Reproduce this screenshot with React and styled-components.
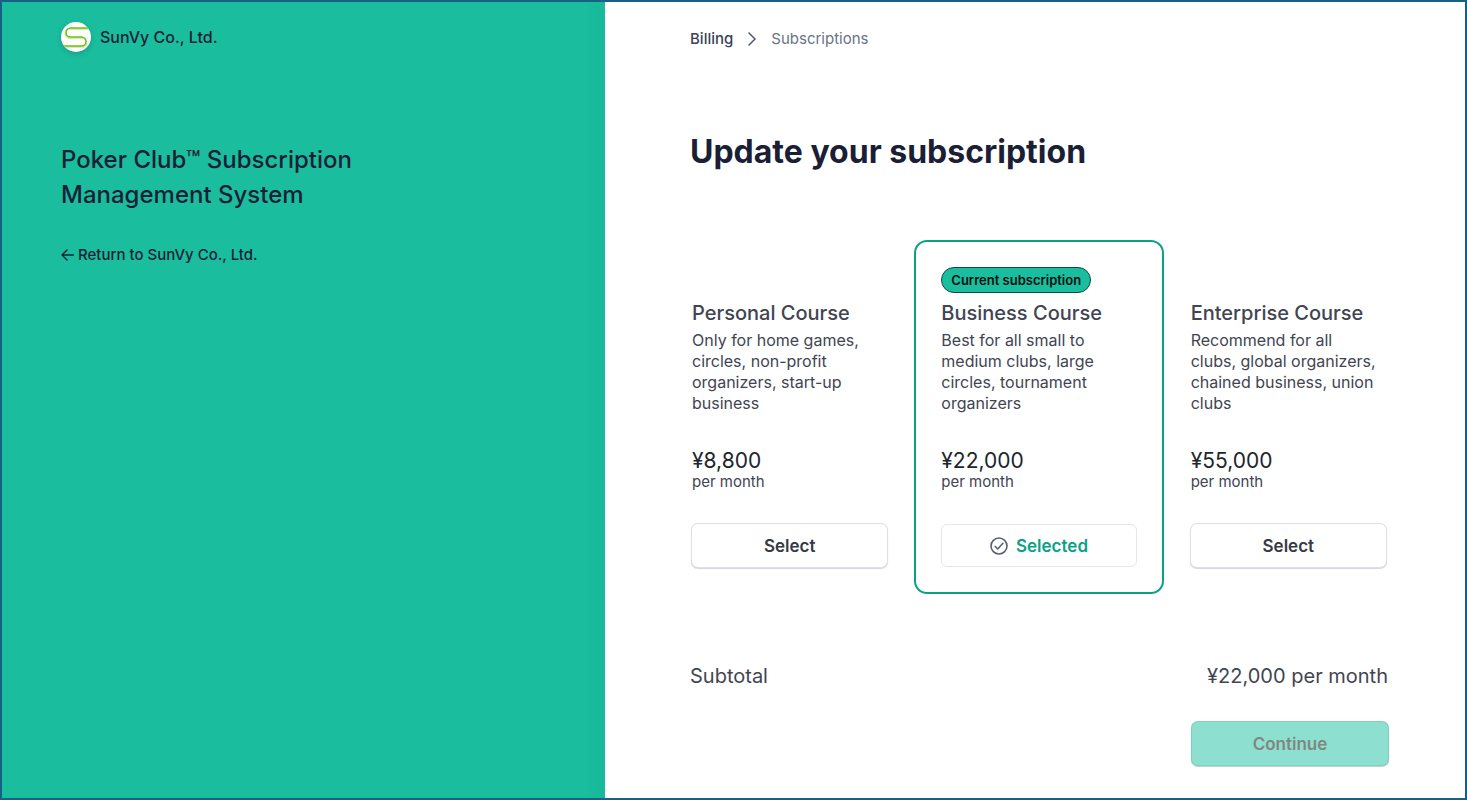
import React from "react";
import styled, { createGlobalStyle } from "styled-components";

const GlobalStyle = createGlobalStyle`
  *, *::before, *::after { box-sizing: border-box; }
  body { margin: 0; background: #fff; font-family: Inter, "Noto Sans", sans-serif; color: #414552; }
  h1, h2, h3, p { margin: 0; }
`;

const Page = styled.div`
  display: grid;
  grid-template-columns: 603fr 860fr;
  min-height: 100vh;
  border: 2px solid #186186;
`;

const BrandPanel = styled.aside`
  display: flex;
  flex-direction: column;
  align-items: flex-start;
  padding: 19px 59px;
  color: #1a1f36;
  background: linear-gradient(to left, #17b999, #18bb9b 14px, #1abd9d 20px);
`;

const Brand = styled.div`
  display: flex;
  align-items: center;
  gap: 9px;
  height: 32px;
  font-size: 16px;
  font-weight: 500;
`;

const Logo = styled.svg`
  width: 30px;
  height: 30px;
  border-radius: 50%;
  background: #fff;
  box-shadow: 0 2px 5px rgba(26, 31, 54, 0.2);
`;

const BrandTitle = styled.h2`
  max-width: 340px;
  margin-top: 89px;
  font-size: 24px;
  line-height: 35px;
  font-weight: 500;
`;

const ReturnLink = styled.a`
  display: flex;
  align-items: center;
  gap: 4px;
  margin-top: 32px;
  font-size: 15px;
  line-height: 22px;
  font-weight: 500;
  color: inherit;
  text-decoration: none;
`;

const Main = styled.main`
  padding: 25px 52px 30px 60px;
`;

const Inset = styled.div`
  padding: 0 25px;
`;

const Breadcrumbs = styled.nav`
  display: flex;
  align-items: center;
  gap: 14px;
  font-size: 15px;
  line-height: 24px;
  color: #697386;
`;

const CrumbLink = styled.a`
  font-weight: 500;
  color: #3c4257;
  text-decoration: none;
`;

const Title = styled.h1`
  margin-top: 79px;
  font-size: 32px;
  line-height: 44px;
  font-weight: 700;
  color: #1a1f36;
`;

const Plans = styled.div`
  display: grid;
  grid-template-columns: repeat(3, 1fr);
  margin-top: 66px;
`;

const Plan = styled.section`
  display: flex;
  flex-direction: column;
  padding: 25px;
  border: 2px solid ${(p) => (p.$current ? "#0aa287" : "transparent")};
  border-radius: 13px;
`;

const BadgeRow = styled.div`
  height: 26px;
`;

const Badge = styled.span`
  display: inline-flex;
  align-items: center;
  height: 26px;
  padding: 0 9px;
  border: 1px solid #0b4b41;
  border-radius: 13px;
  background: #1abd9d;
  color: #06110f;
  font-size: 13px;
  font-weight: 600;
  white-space: nowrap;
`;

const PlanName = styled.h3`
  margin-top: 5px;
  font-size: 20px;
  line-height: 30px;
  font-weight: 500;
  white-space: nowrap;
`;

const PlanText = styled.p`
  max-width: 190px;
  margin-top: 2px;
  min-height: 84px;
  font-size: 16px;
  line-height: 21px;
`;

const Price = styled.p`
  margin-top: 34px;
  font-size: 21px;
  line-height: 26px;
  color: #21252c;
`;

const Period = styled.p`
  font-size: 15px;
  line-height: 16px;
`;

const Button = styled.button`
  display: flex;
  align-items: center;
  justify-content: center;
  gap: 8px;
  width: 100%;
  height: 43px;
  padding: 0;
  border: 0;
  border-radius: 6px;
  background: #fff;
  box-shadow: 0 0 0 1px #dde1e7, 0 1px 1px 1px #d3d7dd;
  color: #353a44;
  font: 600 17px Inter, "Noto Sans", sans-serif;
  cursor: pointer;
`;

const SelectButton = styled(Button)`
  margin-top: 34px;
`;

const SelectedButton = styled(SelectButton)`
  border: 1px solid #e3e6eb;
  box-shadow: none;
  color: #0aa287;
`;

const Subtotal = styled.div`
  display: flex;
  justify-content: space-between;
  margin-top: 67px;
  font-size: 20px;
  line-height: 30px;
`;

const Actions = styled.div`
  display: flex;
  justify-content: flex-end;
  margin-top: 31px;
`;

const ContinueButton = styled(Button)`
  width: 196px;
  background: #8de0d0;
  box-shadow: 0 0 0 1px #80cfbf, 0 1px 1px 1px #b9cfcf;
  color: #808783;
  cursor: default;
`;

const plans = [
  {
    name: "Personal Course",
    text: "Only for home games, circles, non-profit organizers, start-up business",
    price: "¥8,800",
  },
  {
    name: "Business Course",
    text: "Best for all small to medium clubs, large circles, tournament organizers",
    price: "¥22,000",
    current: true,
  },
  {
    name: "Enterprise Course",
    text: "Recommend for all clubs, global organizers, chained business, union clubs",
    price: "¥55,000",
  },
];

function BrandLogo() {
  return (
    <Logo viewBox="0 0 30 30" aria-hidden="true" fill="none">
      <path d="M28 7H9a4 4 0 0 0 0 9H21a4 4 0 0 1 0 9H3" stroke="#d3efad" strokeWidth="2" />
      <path d="M28 6H9.500a4.500 4.500 0 0 0 0 9H20.500a4.500 4.500 0 0 1 0 9H2" stroke="#6fbf1c" strokeWidth="1.500" />
    </Logo>
  );
}

function BackArrow() {
  return (
    <svg width="13" height="12" viewBox="0 0 13 12" fill="none" stroke="currentColor" strokeWidth="1.400" strokeLinecap="round" strokeLinejoin="round" aria-hidden="true">
      <path d="M12.300 6H1M6 1L1 6l5 5" />
    </svg>
  );
}

function Chevron() {
  return (
    <svg width="10" height="14" viewBox="0 0 10 14" fill="none" stroke="#4f566b" strokeWidth="1.500" strokeLinecap="round" strokeLinejoin="round" aria-hidden="true">
      <path d="M2 1l6 6-6 6" />
    </svg>
  );
}

function CheckIcon() {
  return (
    <svg width="18" height="18" viewBox="0 0 18 18" fill="none" stroke="#596070" strokeWidth="1.600" strokeLinecap="round" strokeLinejoin="round" aria-hidden="true">
      <circle cx="9" cy="9" r="8" />
      <path d="M5.200 9.500L7.700 12l5.200-5.700" />
    </svg>
  );
}

export default function App() {
  return (
    <>
      <GlobalStyle />
      <Page>
        <BrandPanel>
          <Brand>
            <BrandLogo />
            <span>SunVy Co., Ltd.</span>
          </Brand>
          <BrandTitle>Poker Club™ Subscription Management System</BrandTitle>
          <ReturnLink href="#return">
            <BackArrow />
            Return to SunVy Co., Ltd.
          </ReturnLink>
        </BrandPanel>
        <Main>
          <Inset>
            <Breadcrumbs aria-label="Breadcrumb">
              <CrumbLink href="#billing">Billing</CrumbLink>
              <Chevron />
              <span>Subscriptions</span>
            </Breadcrumbs>
            <Title>Update your subscription</Title>
          </Inset>
          <Plans>
            {plans.map((plan) => (
              <Plan key={plan.name} $current={plan.current}>
                <BadgeRow>{plan.current && <Badge>Current subscription</Badge>}</BadgeRow>
                <PlanName>{plan.name}</PlanName>
                <PlanText>{plan.text}</PlanText>
                <Price>{plan.price}</Price>
                <Period>per month</Period>
                {plan.current ? (
                  <SelectedButton type="button">
                    <CheckIcon />
                    Selected
                  </SelectedButton>
                ) : (
                  <SelectButton type="button">Select</SelectButton>
                )}
              </Plan>
            ))}
          </Plans>
          <Inset>
            <Subtotal>
              <span>Subtotal</span>
              <span>¥22,000 per month</span>
            </Subtotal>
            <Actions>
              <ContinueButton type="button" disabled>
                Continue
              </ContinueButton>
            </Actions>
          </Inset>
        </Main>
      </Page>
    </>
  );
}
